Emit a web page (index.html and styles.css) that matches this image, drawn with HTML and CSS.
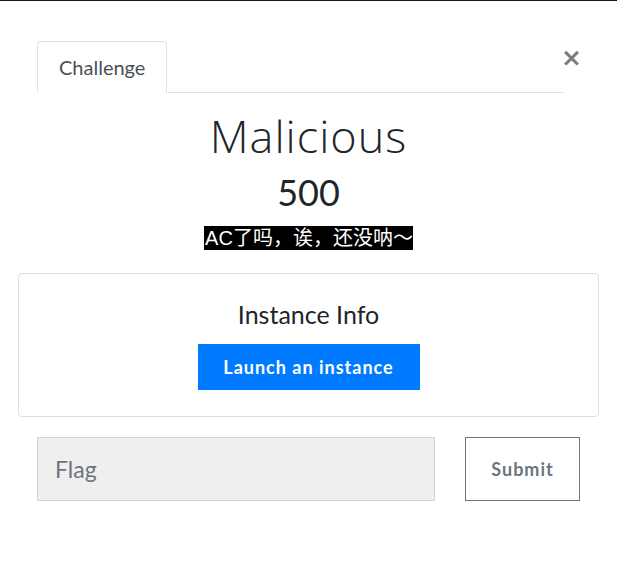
FILE: index.html
```html
<!DOCTYPE html>
<html lang="zh">
<head>
<meta charset="utf-8">
<title>Malicious</title>
<link rel="stylesheet" href="styles.css">
</head>
<body>
<div class="modal">
  <div class="header">
    <ul class="tabs">
      <li class="tab active">Challenge</li>
    </ul>
    <button class="close" type="button" aria-label="Close">&times;</button>
  </div>
  <div class="body">
    <h2 class="title">Malicious</h2>
    <h3 class="value">500</h3>
    <div class="desc"><span class="hidden-text">AC了吗，诶，还没呐～</span></div>
    <div class="card">
      <h4 class="card-title">Instance Info</h4>
      <button class="btn-launch" type="button">Launch an instance</button>
    </div>
    <form class="flag-row">
      <input class="flag-input" type="text" placeholder="Flag">
      <button class="btn-submit" type="button">Submit</button>
    </form>
  </div>
</div>
</body>
</html>
```
FILE: styles.css
```css
* { box-sizing: border-box; }
html, body { margin: 0; padding: 0; background: #fff; }
body {
  font-family: Lato, "Noto Sans CJK SC", sans-serif;
  color: #212529;
  border-top: 1px solid #151515;
  height: 561px;
}
.modal { padding: 0 18px; }
.header {
  display: flex;
  align-items: flex-start;
  padding: 40px 0 0 19px;
}
.tabs {
  list-style: none;
  margin: 0;
  padding: 0;
  width: 527px;
  display: flex;
  border-bottom: 1px solid #dee2e6;
}
.tab {
  margin-bottom: -1px;
  width: 130px;
  height: 52px;
  padding: 0 0 0 21px;
  border: 1px solid #dee2e6;
  border-bottom-color: #fff;
  border-top-left-radius: 4px;
  border-top-right-radius: 4px;
  background: #fff;
  color: #495057;
  font-size: 20px;
  line-height: 50px;
}
.close {
  margin: 4px 0 0 -3px;
  padding: 0;
  border: 0;
  background: none;
  font-family: "DejaVu Sans", sans-serif;
  font-weight: bold;
  font-size: 25px;
  line-height: 26px;
  width: 17px;
  color: #7a7a7a;
  cursor: pointer;
}
.body { text-align: center; }
.title {
  margin: 16px 0 0;
  font-family: "Open Sans", sans-serif;
  font-weight: 300;
  font-size: 45px;
  line-height: 54px;
  letter-spacing: 1px;
  color: #212529;
}
.value {
  margin: 8px 0 0;
  font-weight: 400;
  font-size: 36px;
  line-height: 43px;
}
.desc { margin-top: 12px; height: 24px; }
.hidden-text {
  display: inline-block;
  height: 24px;
  padding: 0 0 0 1px;
  background: #000;
  color: #fff;
  font-family: "Liberation Sans", "Noto Sans CJK SC", sans-serif;
  font-size: 20px;
  line-height: 24px;
}
.card {
  margin-top: 23px;
  height: 144px;
  border: 1px solid #dfdfdf;
  border-radius: 4px;
  padding-top: 24px;
}
.card-title {
  margin: 0;
  font-weight: 400;
  font-size: 25px;
  line-height: 32px;
}
.btn-launch {
  margin-top: 14px;
  width: 222px;
  height: 46px;
  border: 0;
  border-radius: 0;
  background: #007bff;
  color: #fff;
  font-family: Lato, sans-serif;
  font-weight: bold;
  font-size: 18px;
  letter-spacing: 1px;
}
.flag-row {
  margin: 20px 0 0;
  padding: 0 19px;
  display: flex;
  gap: 30px;
}
.flag-input {
  width: 398px;
  height: 64px;
  border: 1px solid #ced4da;
  border-radius: 0;
  background: #efefef;
  padding: 0 17px;
  font-family: Lato, sans-serif;
  font-size: 23px;
  color: #495057;
}
.flag-input::placeholder { color: #6c757d; }
.btn-submit {
  width: 115px;
  height: 64px;
  border: 1px solid #6c757d;
  border-radius: 0;
  background: #fff;
  color: #6c757d;
  font-family: Lato, sans-serif;
  font-weight: bold;
  font-size: 18px;
  letter-spacing: 1px;
}
```
